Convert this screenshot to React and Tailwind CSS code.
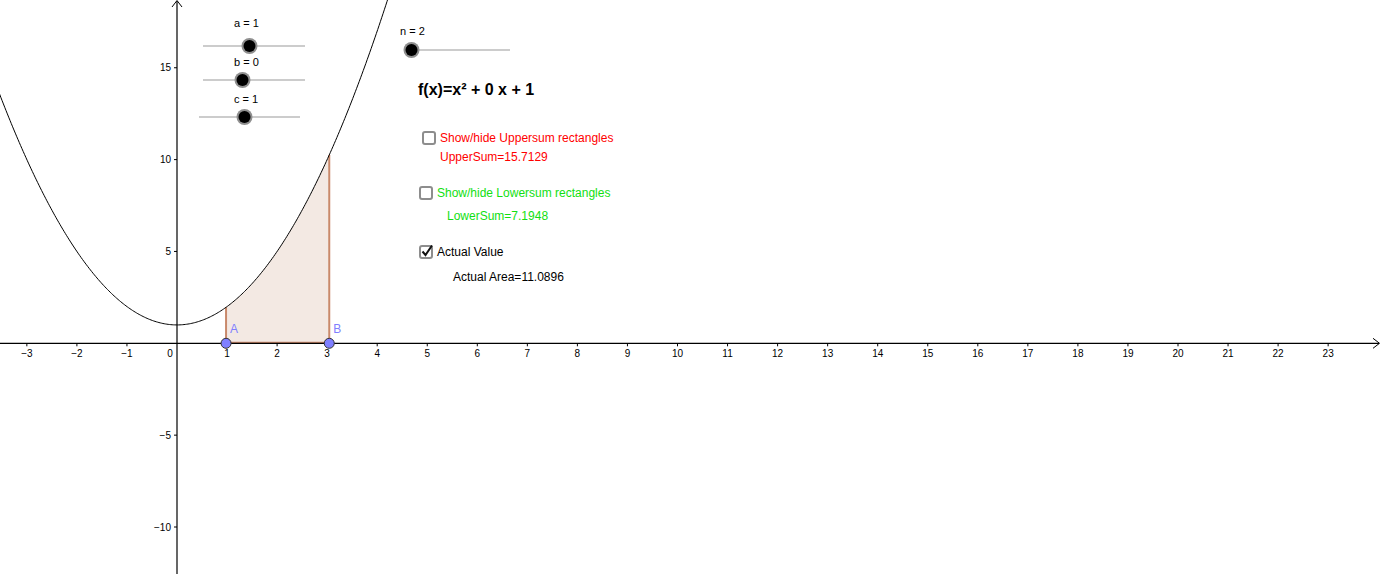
import React from "react";

const OX = 177;
const OY = 343.3;
const SX = 50.05;
const SY = 18.37;
const px = (x) => OX + x * SX;
const py = (y) => OY - y * SY;
const f = (x) => x * x + 1;

function curvePath(x0, x1, n = 300) {
  let d = "";
  for (let i = 0; i <= n; i++) {
    const x = x0 + ((x1 - x0) * i) / n;
    d += (i === 0 ? "M" : "L") + px(x).toFixed(2) + " " + py(f(x)).toFixed(2) + " ";
  }
  return d;
}

const A = 0.98;
const B = 3.042;

function regionPath() {
  let d = `M${px(A)} ${py(0)} L${px(A)} ${py(f(A))} `;
  const n = 100;
  for (let i = 1; i <= n; i++) {
    const x = A + ((B - A) * i) / n;
    d += `L${px(x).toFixed(2)} ${py(f(x)).toFixed(2)} `;
  }
  d += `L${px(B)} ${py(0)} Z`;
  return d;
}

function Slider({ x1, x2, y, k, label, lx, ly }) {
  return (
    <g>
      <text x={lx} y={ly} fontSize="11" fill="#000">
        {label}
      </text>
      <line x1={x1} y1={y} x2={x2} y2={y} stroke="#999" strokeWidth="1" />
      <circle cx={k} cy={y} r="8" fill="#8f8f8f" />
      <circle cx={k} cy={y} r="6" fill="#000" />
    </g>
  );
}

function Graph() {
  const xTicks = [];
  for (let i = -3; i <= 23; i++) if (i !== 0) xTicks.push(i);
  const yTicks = [-10, -5, 5, 10, 15];
  const lbl = (n) => (n < 0 ? "\u2212" + Math.abs(n) : String(n));
  return (
    <svg
      width="1382"
      height="574"
      viewBox="0 0 1382 574"
      className="absolute left-0 top-0 font-['Liberation_Sans',Arial,sans-serif]"
    >
      <path d={regionPath()} fill="#f3e9e3" />
      <line x1={px(A)} y1={py(0)} x2={px(A)} y2={py(f(A))} stroke="#c9896b" strokeWidth="2" />
      <line x1={px(B)} y1={py(0)} x2={px(B)} y2={py(f(B))} stroke="#c9896b" strokeWidth="2" />
      <line x1={px(A)} y1={py(0) - 0.5} x2={px(B)} y2={py(0) - 0.5} stroke="#c9896b" strokeWidth="2" />

      <line x1="0" y1={OY} x2="1379" y2={OY} stroke="#000" strokeWidth="1.2" />
      <path d={`M1373 ${OY - 5} L1379.5 ${OY} L1373 ${OY + 5}`} fill="none" stroke="#000" strokeWidth="1" />
      <line x1={OX} y1="1" x2={OX} y2="574" stroke="#000" strokeWidth="1.2" />
      <path d={`M${OX - 5} 7 L${OX} 0.5 L${OX + 5} 7`} fill="none" stroke="#000" strokeWidth="1" />

      {xTicks.map((i) => (
        <g key={i}>
          <line x1={px(i)} y1={OY} x2={px(i)} y2={OY + 3} stroke="#000" strokeWidth="1" />
          <text x={px(i)} y={OY + 14} fontSize="10" textAnchor="middle" fill="#000">
            {lbl(i)}
          </text>
        </g>
      ))}
      <text x={OX - 7} y={OY + 14} fontSize="10" textAnchor="middle" fill="#000">
        0
      </text>
      {yTicks.map((j) => (
        <g key={j}>
          <line x1={OX - 3} y1={py(j)} x2={OX} y2={py(j)} stroke="#000" strokeWidth="1" />
          <text x={OX - 6} y={py(j) + 3.5} fontSize="10" textAnchor="end" fill="#000">
            {lbl(j)}
          </text>
        </g>
      ))}

      <path d={curvePath(-3.6, 4.3)} fill="none" stroke="#000" strokeWidth="1" />

      <circle cx={px(A)} cy={OY} r="5" fill="#7f7fff" stroke="#333" strokeWidth="1" />
      <circle cx={px(B)} cy={OY} r="5" fill="#7f7fff" stroke="#333" strokeWidth="1" />
      <text x={px(A) + 4} y={OY - 10} fontSize="12" fill="#7f7fff">A</text>
      <text x={px(B) + 4} y={OY - 10} fontSize="12" fill="#7f7fff">B</text>

      <Slider label="a = 1" lx={234} ly={27} x1={203} x2={305} y={46} k={249.5} />
      <Slider label="b = 0" lx={234} ly={66} x1={203} x2={305} y={80} k={242.5} />
      <Slider label="c = 1" lx={234} ly={103} x1={199} x2={300} y={117} k={244.5} />
      <Slider label="n = 2" lx={400} ly={35} x1={411} x2={510} y={50} k={411.5} />
    </svg>
  );
}

function Box({ checked }) {
  return (
    <div className="relative h-[14px] w-[14px] shrink-0 rounded-[3px] border-2 border-[#8d8d8d] bg-white">
      {checked && (
        <svg width="12" height="12" viewBox="0 0 12 12" className="absolute left-0 top-[-2px]">
          <path d="M1.5 6.5 L4.5 10 L11 0.5" fill="none" stroke="#111" strokeWidth="2" />
        </svg>
      )}
    </div>
  );
}

export default function App() {
  return (
    <div className="relative h-[574px] w-[1382px] overflow-hidden bg-white font-['Liberation_Sans',Arial,sans-serif]">
      <Graph />
      <div className="absolute left-[418px] top-[80px] flex flex-col text-[12px] leading-[14px] whitespace-nowrap">
        <div className="text-[16px] leading-[20px] font-bold text-black">f(x)=x² + 0 x + 1</div>

        <div className="mt-[31px] flex items-center gap-[4px] pl-[4px] text-[#ff0000]">
          <Box />
          <span>Show/hide Uppersum rectangles</span>
        </div>
        <div className="mt-[5px] pl-[22px] text-[#ff0000]">UpperSum=15.7129</div>

        <div className="mt-[22px] flex items-center gap-[4px] pl-[1px] text-[#11e011]">
          <Box />
          <span>Show/hide Lowersum rectangles</span>
        </div>
        <div className="mt-[9px] pl-[29px] text-[#11e011]">LowerSum=7.1948</div>

        <div className="mt-[22px] flex items-center gap-[4px] pl-[1px] text-black">
          <Box checked />
          <span>Actual Value</span>
        </div>
        <div className="mt-[11px] pl-[35px] text-black">Actual Area=11.0896</div>
      </div>
    </div>
  );
}
